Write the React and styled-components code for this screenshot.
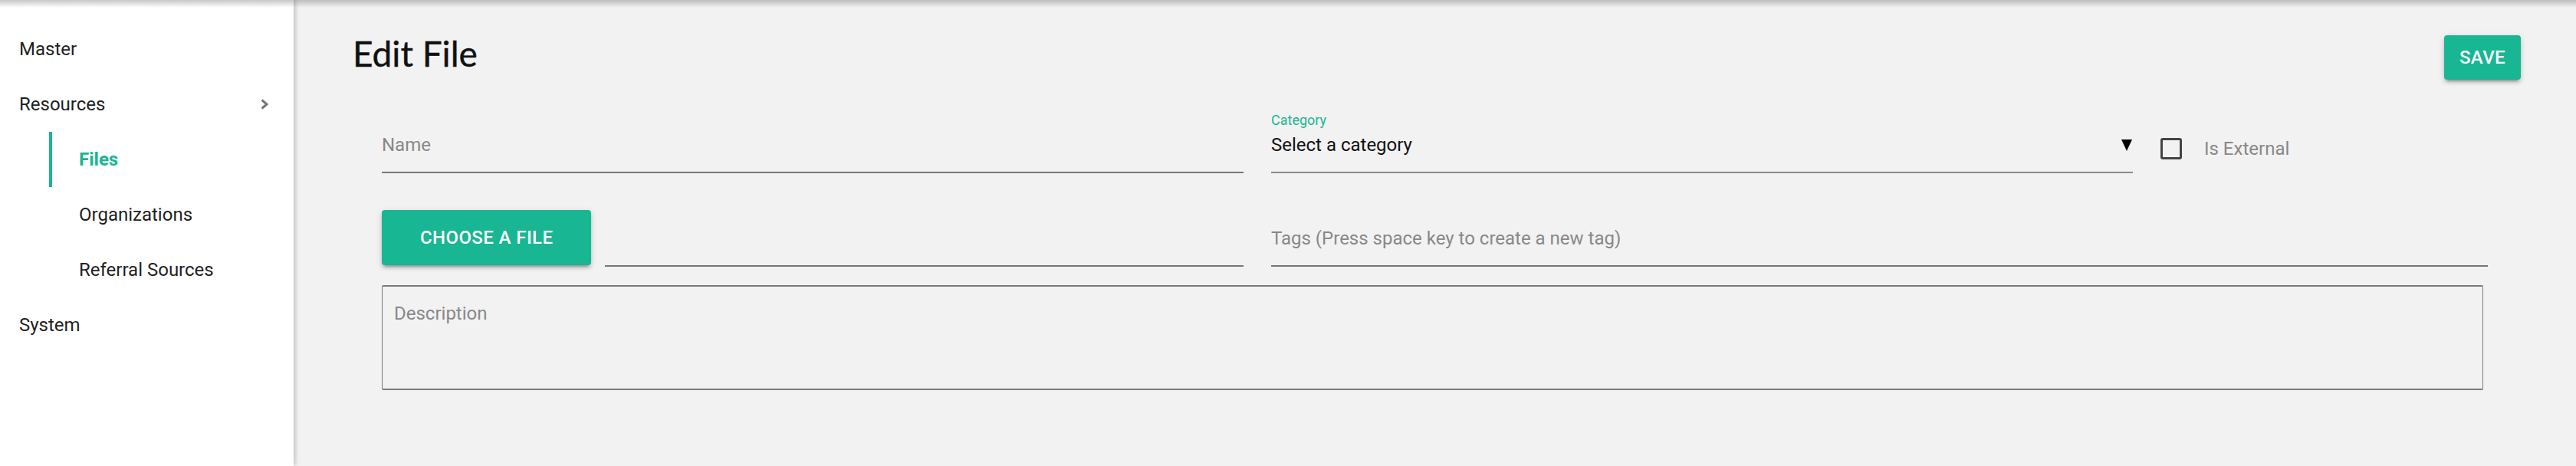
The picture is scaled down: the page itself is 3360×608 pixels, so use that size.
import React from "react";
import styled, { createGlobalStyle } from "styled-components";

const GlobalStyle = createGlobalStyle`
  html, body, #root {
    margin: 0;
    height: 100%;
  }
  body {
    font-family: Roboto, "Liberation Sans", sans-serif;
    background: #f2f2f2;
  }
  * {
    box-sizing: border-box;
  }
`;

const green = "#18b692";

const Shell = styled.div`
  position: relative;
  display: flex;
  height: 100vh;
  background: #f2f2f2;

  /* shadow of the app bar sitting just above the frame */
  &::before {
    content: "";
    position: absolute;
    top: 0;
    left: 0;
    right: 0;
    height: 10px;
    background: linear-gradient(rgba(0, 0, 0, 0.22), rgba(0, 0, 0, 0));
    z-index: 5;
    pointer-events: none;
  }
`;

const Sidebar = styled.nav`
  width: 383px;
  flex-shrink: 0;
  background: #fff;
  box-shadow: 2px 0 6px rgba(0, 0, 0, 0.22);
  z-index: 2;
  padding-top: 28px;
`;

const NavItem = styled.div`
  display: flex;
  align-items: center;
  justify-content: space-between;
  height: 72px;
  padding: 0 32px 0 25px;
  font-size: 24px;
  color: #1f1f1f;
`;

const SubItem = styled.div`
  display: flex;
  align-items: center;
  height: 72px;
  margin-left: 64px;
  padding-left: 35px;
  border-left: 4px solid ${(p) => (p.$active ? green : "transparent")};
  font-size: 24px;
  font-weight: ${(p) => (p.$active ? 700 : 400)};
  color: ${(p) => (p.$active ? green : "#1f1f1f")};
`;

const Chevron = () => (
  <svg width="12" height="14" viewBox="0 0 12 14">
    <polyline
      points="2.5,1.5 9,7 2.5,12.5"
      fill="none"
      stroke="#777"
      strokeWidth="3"
    />
  </svg>
);

const Main = styled.main`
  flex: 1;
  padding: 42px 72px 0 77px;
`;

const Header = styled.div`
  display: flex;
  justify-content: space-between;
  align-items: flex-start;
`;

const Title = styled.h1`
  margin: 0;
  font-family: Lato, "Open Sans", sans-serif;
  font-weight: 400;
  font-size: 46px;
  line-height: 1.2;
  color: #111;
  -webkit-text-stroke: 0.4px #111;
`;

const Button = styled.button`
  height: ${(p) => p.$h}px;
  padding: 0 ${(p) => p.$px}px;
  margin-top: ${(p) => p.$mt || 0}px;
  margin-left: ${(p) => p.$ml || 0}px;
  border: none;
  border-radius: 4px;
  background: ${green};
  color: #fff;
  font-family: Roboto, sans-serif;
  font-weight: 500;
  font-size: 24px;
  letter-spacing: 0.4px;
  text-transform: uppercase;
  box-shadow: 0 6px 2px -4px rgba(0, 0, 0, 0.2), 0 4px 4px rgba(0, 0, 0, 0.14),
    0 2px 10px rgba(0, 0, 0, 0.12);
  flex-shrink: 0;
`;

const Form = styled.div`
  margin: 42px 43px 0 38px;
`;

const Row = styled.div`
  display: grid;
  grid-template-columns: 1124px 1124px 1fr;
  column-gap: 36px;
  align-items: end;
  margin-top: ${(p) => p.$mt || 0}px;
`;

const Field = styled.div`
  display: flex;
  flex-direction: column;
  padding-bottom: 20px;
  border-bottom: 2px solid ${(p) => p.$line || "#767676"};
  grid-column: ${(p) => p.$span || "auto"};
`;

const SmallLabel = styled.label`
  font-size: 18px;
  line-height: 22px;
  color: ${green};
  margin-bottom: 6px;
`;

const Input = styled.input`
  height: 30px;
  padding: 0;
  border: none;
  outline: none;
  background: transparent;
  font-family: Roboto, sans-serif;
  font-size: 24px;
  color: #111;

  &::placeholder {
    color: #888;
  }
`;

const SelectValue = styled.div`
  display: flex;
  align-items: center;
  justify-content: space-between;
  height: 30px;
  font-size: 24px;
  color: #111;
`;

const Caret = styled.span`
  width: 0;
  height: 0;
  border-left: 7.5px solid transparent;
  border-right: 7.5px solid transparent;
  border-top: 15px solid #000;
  margin-right: 1px;
`;

const CheckGroup = styled.label`
  display: flex;
  align-items: center;
  gap: 29px;
  height: 30px;
  margin-bottom: 17px;
  font-size: 24px;
  color: #888;
`;

const Box = styled.span`
  width: 28px;
  height: 28px;
  border: 3px solid #444;
  border-radius: 3px;
`;

const FileCell = styled.div`
  display: flex;
  align-items: flex-start;
  gap: 18px;
  height: 74px;
`;

const FileLine = styled.div`
  flex: 1;
  align-self: stretch;
  border-bottom: 2px solid #767676;
`;

const Textarea = styled.textarea`
  grid-column: 1 / -1;
  height: 137px;
  margin-right: 6px;
  padding: 20px 15px;
  border: 2px solid #7a7a7a;
  border-left-width: 1.5px;
  border-right-width: 1.5px;
  border-radius: 2px;
  background: transparent;
  resize: none;
  outline: none;
  font-family: Roboto, sans-serif;
  font-size: 24px;
  line-height: 30px;

  &::placeholder {
    color: #888;
  }
`;

export default function App() {
  return (
    <>
      <GlobalStyle />
      <Shell>
        <Sidebar>
          <NavItem>Master</NavItem>
          <NavItem>
            Resources
            <Chevron />
          </NavItem>
          <SubItem $active>Files</SubItem>
          <SubItem>Organizations</SubItem>
          <SubItem>Referral Sources</SubItem>
          <NavItem>System</NavItem>
        </Sidebar>

        <Main>
          <Header>
            <Title>Edit File</Title>
            <Button $h={58} $px={20} $mt={4}>
              Save
            </Button>
          </Header>

          <Form>
            <Row>
              <Field>
                <Input placeholder="Name" />
              </Field>
              <Field $line="#8a8a8a">
                <SmallLabel>Category</SmallLabel>
                <SelectValue>
                  Select a category
                  <Caret />
                </SelectValue>
              </Field>
              <CheckGroup>
                <Box />
                Is External
              </CheckGroup>
            </Row>

            <Row $mt={48}>
              <FileCell>
                <Button $h={72} $px={50}>
                  Choose a file
                </Button>
                <FileLine />
              </FileCell>
              <Field $span="2 / span 2">
                <Input placeholder="Tags (Press space key to create a new tag)" />
              </Field>
            </Row>

            <Row $mt={24}>
              <Textarea placeholder="Description" />
            </Row>
          </Form>
        </Main>
      </Shell>
    </>
  );
}
